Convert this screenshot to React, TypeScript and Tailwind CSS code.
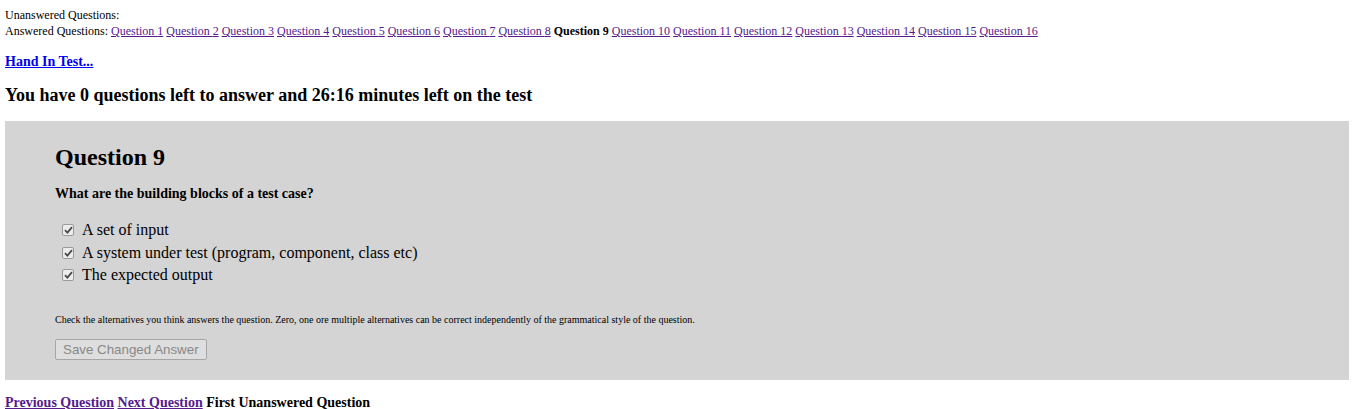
import { JSX } from "react";

const answered = [1, 2, 3, 4, 5, 6, 7, 8, 9, 10, 11, 12, 13, 14, 15, 16];
const current = 9;

const alternatives = [
  "A set of input",
  "A system under test (program, component, class etc)",
  "The expected output",
];

function CheckedBox(): JSX.Element {
  return (
    <span className="ml-[7px] mr-[8px] w-[12px] h-[12px] border border-[#9a9a9a] rounded-[2px] bg-[#ececec] flex items-center justify-center shrink-0">
      <svg width="9" height="8" viewBox="0 0 9 8">
        <path d="M1 4.2 L3.4 6.6 L8 1.2" fill="none" stroke="#4a4a4a" strokeWidth="1.8" />
      </svg>
    </span>
  );
}

function App(): JSX.Element {
  return (
    <div className="font-['Liberation_Serif',serif] text-black bg-white min-h-screen pl-[5px] pr-[3px] pt-[7px]">
      <div className="text-[12px] leading-[16px]">Unanswered Questions:</div>
      <div className="text-[12px] leading-[16px]">
        Answered Questions:{" "}
        {answered.map((n) =>
          n === current ? (
            <span key={n}>
              <b>Question {n}</b>{" "}
            </span>
          ) : (
            <span key={n}>
              <a href="#" className="text-[#551a8b] underline">
                Question {n}
              </a>{" "}
            </span>
          )
        )}
      </div>

      <div className="mt-[15px] text-[14px] leading-[16px] font-bold">
        <a href="#" className="text-[#0000ee] underline">
          Hand In Test...
        </a>
      </div>

      <h3 className="mt-[14px] text-[18px] leading-[22px] font-bold">
        You have 0 questions left to answer and 26:16 minutes left on the test
      </h3>

      <div className="mt-[15px] bg-[#d4d4d4] pl-[50px] pt-[22px] pb-[19px]">
        <h2 className="text-[24px] leading-[28px] font-bold">Question 9</h2>
        <p className="mt-[15px] text-[14px] leading-[16px] font-bold">
          What are the building blocks of a test case?
        </p>
        <div className="mt-[17px]">
          {alternatives.map((alt) => (
            <div key={alt} className="flex items-center h-[22.5px] text-[16px]">
              <CheckedBox />
              {alt}
            </div>
          ))}
        </div>
        <p className="mt-[27px] text-[10px] leading-[12px]">
          Check the alternatives you think answers the question. Zero, one ore multiple alternatives can be correct independently of the grammatical style of the question.
        </p>
        <button
          disabled
          className="mt-[13px] h-[21px] px-[7px] border border-[#a6a6a6] bg-[#dedede] rounded-[2px] text-[13.33px] text-[#888888] font-['Liberation_Sans',sans-serif] leading-[15px]"
        >
          Save Changed Answer
        </button>
      </div>

      <div className="mt-[15px] text-[14px] leading-[16px] font-bold">
        <a href="#" className="text-[#551a8b] underline">
          Previous Question
        </a>{" "}
        <a href="#" className="text-[#551a8b] underline">
          Next Question
        </a>{" "}
        First Unanswered Question
      </div>
    </div>
  );
}

export default App;
